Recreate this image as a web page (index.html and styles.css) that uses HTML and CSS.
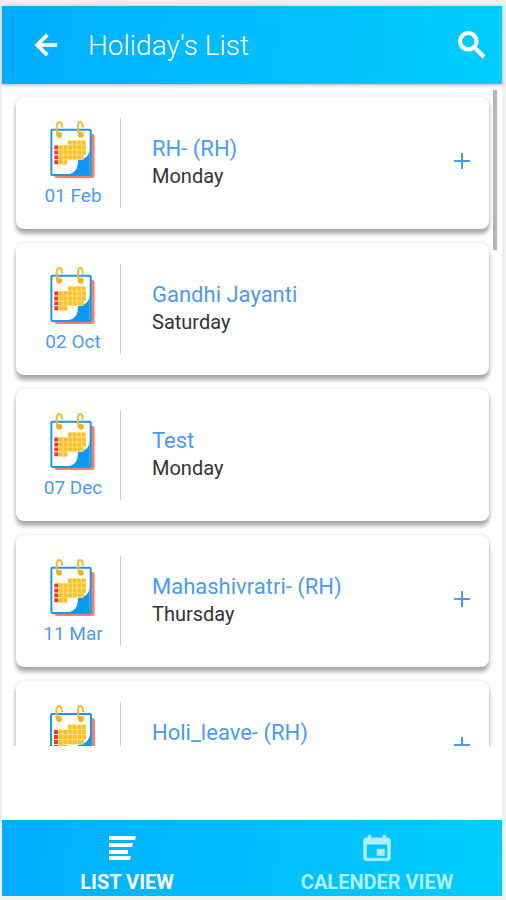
FILE: index.html
```html
<!DOCTYPE html>
<html lang="en">
  <head>
    <meta charset="UTF-8" />
    <title>Holiday's List</title>
    <meta name="viewport" content="width=device-width, initial-scale=1.0" />
    <link rel="stylesheet" href="styles.css">
  </head>
  <body>
    <!-- shared calendar picture -->
    <svg class="sprite" aria-hidden="true">
      <symbol id="calendar" viewBox="0 0 48 60">
        <rect x="5" y="14" width="41" height="45" rx="3" fill="#f9806a" />
        <rect x="2" y="10" width="40" height="46" rx="1" fill="#fff" stroke="#1e96e6" stroke-width="2" />
        <path d="M41 30C40 37 36 40 29 41C29 48 28 53 20 55H41Z" fill="#0a97f5" />
        <path d="M9 28H37M9 33H37M9 38H35M9 43H18M19 23H37" fill="none" stroke="#ffdf80" stroke-width="5" />
        <g fill="none" stroke="#fdbf25" stroke-width="4" stroke-dasharray="3.500 1.200">
          <path d="M19 23H37" />
          <path d="M10 28H37" />
          <path d="M10 33H37" />
          <path d="M10 38H35" />
          <path d="M10 43H19" />
        </g>
        <path d="M7 26V46" fill="none" stroke="#f03a26" stroke-width="4" stroke-dasharray="4 1" />
        <g fill="none" stroke="#fbb829" stroke-width="2">
          <path d="M8 15C6 7 8 2 10 2C13 2 13 5 13 8" />
          <path d="M30 15C28 7 29 2 31 2C34 2 34 5 34 8" />
        </g>
        <circle cx="10" cy="15" r="3" fill="#f9b31a" />
        <circle cx="32" cy="15" r="3" fill="#f9b31a" />
      </symbol>
    </svg>

    <div class="app">
      <header class="header">
        <button class="icon-button" aria-label="Back">
          <svg width="32" height="32" viewBox="0 0 24 24">
            <path d="M20 11H7.830l5.590-5.590L12 4l-8 8 8 8 1.410-1.410L7.830 13H20z" fill="currentColor" stroke="currentColor" stroke-width=".8" />
          </svg>
        </button>
        <h1 class="title">Holiday's List</h1>
        <button class="icon-button" aria-label="Search">
          <svg width="36" height="36" viewBox="0 0 24 24">
            <path d="M15.500 14h-.79l-.28-.27A6.471 6.471 0 0 0 16 9.500 6.500 6.500 0 1 0 9.500 16c1.610 0 3.090-.59 4.230-1.570l.27.28v.79l5 4.990L20.490 19zm-6 0C7.010 14 5 11.990 5 9.500S7.010 5 9.500 5 14 7.010 14 9.500 11.990 14 9.500 14z" fill="currentColor" stroke="currentColor" stroke-width=".8" />
          </svg>
        </button>
      </header>

      <main class="content">
        <ul class="list">
          <li class="card">
            <div class="date">
              <svg class="calendar"><use href="#calendar" /></svg>
              <span>01 Feb</span>
            </div>
            <div class="info">
              <h2 class="name">RH- (RH)</h2>
              <p class="day">Monday</p>
            </div>
            <button class="add" aria-label="Add RH">
              <svg width="16" height="16"><path d="M8 0V16M0 8H16" /></svg>
            </button>
          </li>
          <li class="card">
            <div class="date">
              <svg class="calendar"><use href="#calendar" /></svg>
              <span>02 Oct</span>
            </div>
            <div class="info">
              <h2 class="name">Gandhi Jayanti</h2>
              <p class="day">Saturday</p>
            </div>
          </li>
          <li class="card">
            <div class="date">
              <svg class="calendar"><use href="#calendar" /></svg>
              <span>07 Dec</span>
            </div>
            <div class="info">
              <h2 class="name">Test</h2>
              <p class="day">Monday</p>
            </div>
          </li>
          <li class="card">
            <div class="date">
              <svg class="calendar"><use href="#calendar" /></svg>
              <span>11 Mar</span>
            </div>
            <div class="info">
              <h2 class="name">Mahashivratri- (RH)</h2>
              <p class="day">Thursday</p>
            </div>
            <button class="add" aria-label="Add Mahashivratri">
              <svg width="16" height="16"><path d="M8 0V16M0 8H16" /></svg>
            </button>
          </li>
          <li class="card">
            <div class="date">
              <svg class="calendar"><use href="#calendar" /></svg>
            </div>
            <div class="info">
              <h2 class="name">Holi_leave- (RH)</h2>
            </div>
            <button class="add" aria-label="Add Holi leave">
              <svg width="16" height="16"><path d="M8 0V16M0 8H16" /></svg>
            </button>
          </li>
        </ul>
        <div class="scroll-thumb"></div>
      </main>

      <nav class="tabs">
        <a class="tab active" href="#list">
          <svg width="38" height="28" viewBox="0 0 38 28">
            <path d="M1 2H28L27 6H1zM1 9H25L24 13H1zM1 16H20V20H1zM1 22H23L22 26H1z" fill="currentColor" />
          </svg>
          <span>LIST VIEW</span>
        </a>
        <a class="tab" href="#calendar-view">
          <svg width="30" height="28" viewBox="2 0 20 22" preserveAspectRatio="none">
            <path d="M17 12h-5v5h5v-5zM16 1v2H8V1H6v2H5c-1.110 0-1.990.9-1.990 2L3 19a2 2 0 0 0 2 2h14c1.100 0 2-.9 2-2V5c0-1.100-.9-2-2-2h-1V1h-2zm3 18H5V8h14v11z" fill="currentColor" stroke="currentColor" stroke-width=".4" />
          </svg>
          <span>CALENDER VIEW</span>
        </a>
      </nav>
    </div>
  </body>
</html>
```
FILE: styles.css
```css
* {
  box-sizing: border-box;
}

body {
  margin: 0;
  padding: 6px 4px 4px 2px;
  height: 100vh;
  background: #f0f0f0;
  font-family: Roboto, Arial, sans-serif;
}

button {
  padding: 0;
  border: none;
  background: none;
  cursor: pointer;
}

svg {
  display: block;
}

.sprite {
  position: absolute;
  width: 0;
  height: 0;
}

.app {
  display: flex;
  flex-direction: column;
  height: 100%;
  background: #fff;
}

.header {
  display: flex;
  align-items: center;
  gap: 26px;
  height: 78px;
  flex-shrink: 0;
  padding: 0 12px 0 28px;
  background: linear-gradient(100deg, #00adff, #00ceff);
  color: #fff;
  box-shadow: 0 1px 4px rgba(0, 0, 0, 0.3);
  z-index: 1;
}

.icon-button {
  color: #fff;
}

.title {
  flex: 1;
  margin: 0;
  font-size: 28px;
  font-weight: 300;
}

.content {
  position: relative;
  flex: 1;
  min-height: 0;
  margin-bottom: 74px;
  overflow: hidden;
}

.list {
  display: flex;
  flex-direction: column;
  gap: 14px;
  margin: 0;
  padding: 13px 13px 14px 14px;
  list-style: none;
}

.card {
  display: flex;
  align-items: flex-start;
  flex-shrink: 0;
  height: 132px;
  padding: 21px 19px 0 10px;
  border-radius: 8px;
  background: #fff;
  box-shadow: 0 5px 4px rgba(0, 0, 0, 0.32), 0 0 4px rgba(0, 0, 0, 0.12);
}

.date {
  display: flex;
  flex-direction: column;
  align-items: center;
  gap: 5px;
  width: 95px;
  height: 90px;
  border-right: 1px solid #ccc;
  color: #4a9bf5;
  font-size: 19px;
  line-height: 24px;
}

.calendar {
  width: 48px;
  height: 60px;
  margin-top: 2px;
}

.info {
  flex: 1;
  padding: 17px 0 0 31px;
}

.name {
  margin: 0;
  color: #4a9bf5;
  font-size: 22px;
  font-weight: 400;
  line-height: 28px;
}

.day {
  margin: 0;
  color: #333;
  font-size: 20px;
  line-height: 26px;
}

.add {
  margin-top: 35px;
}

.add path {
  stroke: #4a9bf5;
  stroke-width: 2;
}

.scroll-thumb {
  position: absolute;
  top: 6px;
  right: 5px;
  width: 4px;
  height: 160px;
  background: #b5b5b5;
}

.tabs {
  display: flex;
  flex-shrink: 0;
  height: 76px;
  background: linear-gradient(100deg, #00adff, #00ceff);
}

.tab {
  display: flex;
  flex: 1;
  flex-direction: column;
  align-items: center;
  gap: 8px;
  padding-top: 14px;
  color: #b3efff;
  font-size: 20px;
  font-weight: 700;
  line-height: 24px;
  text-decoration: none;
}

.tab.active {
  color: #fff;
}
```
